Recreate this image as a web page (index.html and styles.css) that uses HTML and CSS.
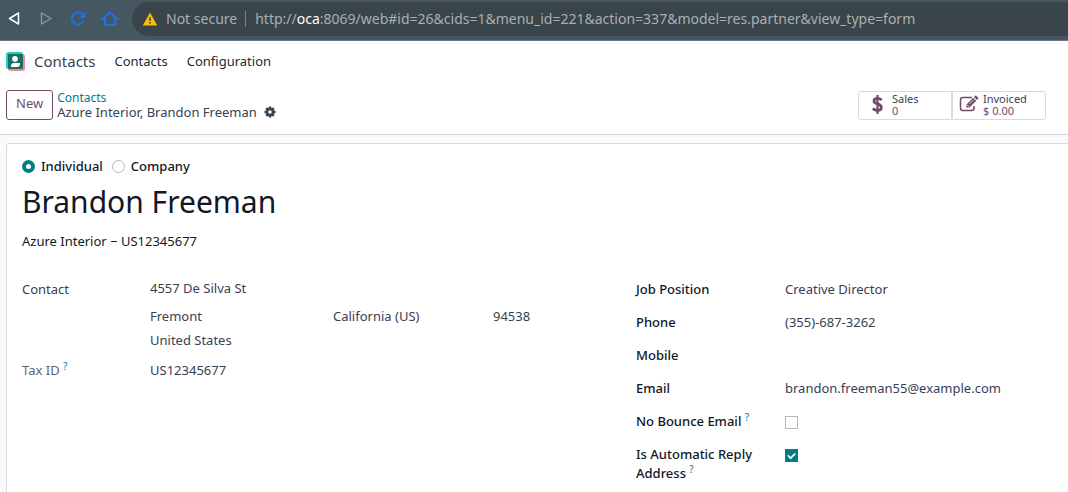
FILE: index.html
```html
<!DOCTYPE html>
<html lang="en">
<head>
<meta charset="utf-8">
<meta name="viewport" content="width=device-width, initial-scale=1">
<title>Brandon Freeman</title>
<link rel="stylesheet" href="styles.css">
</head>
<body>
<div class="browser-bar">
  <div class="browser-buttons">
    <button class="browser-button" aria-label="Back"><svg width="18" height="18" viewBox="0 0 18 18"><path d="M4.500 8.500L13.500 3V14Z" fill="none" stroke="#fff" stroke-width="1.500" stroke-linejoin="round"/></svg></button>
    <button class="browser-button" aria-label="Forward"><svg width="18" height="18" viewBox="0 0 18 18"><path d="M14 8.500L4.500 3V14Z" fill="none" stroke="#8f999e" stroke-width="1.300" stroke-linejoin="round"/></svg></button>
    <button class="browser-button" aria-label="Reload"><svg width="18" height="18" viewBox="0 0 18 18"><path d="M14 5A6.100 6.100 0 1 0 14.800 10.300" fill="none" stroke="#1a73e8" stroke-width="2"/><path d="M16 2V8H10Z" fill="#1a73e8"/></svg></button>
    <button class="browser-button" aria-label="Home"><svg width="18" height="18" viewBox="0 0 18 18"><path d="M2 9L9 2.200L16 9H14V15H4V9Z" fill="none" stroke="#1a73e8" stroke-width="1.900"/></svg></button>
  </div>
  <div class="address-bar">
    <svg class="warning" width="16" height="16" viewBox="0 0 16 16"><path d="M8 1.500L15.300 14.500H.7Z" fill="#fbbc04"/><path d="M7.200 6.200H8.800V9.800H7.200ZM7.200 11H8.800V12.600H7.200Z" fill="#39454b"/></svg>
    <span class="security">Not secure</span>
    <span class="url">http://<span class="host">oca</span>:8069/web#id=26&amp;cids=1&amp;menu_id=221&amp;action=337&amp;model=res.partner&amp;view_type=form</span>
  </div>
</div>

<header class="top">
  <nav class="navbar">
    <a class="brand" href="#">
      <svg width="20" height="20" viewBox="0 0 20 20"><rect x="2" y="2" width="17" height="17" rx="2.500" fill="#fc868b"/><rect x="0" y="0" width="17" height="17" rx="2.500" fill="#1ad3bb"/><rect x="2" y="2" width="15" height="15" rx="1" fill="#1a6f66"/><circle cx="9" cy="6.800" r="2.900" fill="#fff"/><path d="M5 15V14Q5 11 8 11H14V12Q14 15 11 15Z" fill="#fff"/></svg>
      <span>Contacts</span>
    </a>
    <a class="menu" href="#">Contacts</a>
    <a class="menu" href="#">Configuration</a>
  </nav>
  <div class="control-panel">
    <button class="new">New</button>
    <div class="breadcrumb">
      <a href="#">Contacts</a>
      <div class="current">
        <span>Azure Interior, Brandon Freeman</span>
        <button class="gear" aria-label="Actions"><svg width="12" height="12" viewBox="0 0 12 12"><path d="M6 .5V11.500M.5 6H11.500" stroke="#374151" stroke-width="2.600"/><path d="M2.200 2.200L9.800 9.800M9.800 2.200L2.200 9.800" stroke="#374151" stroke-width="2.400"/><circle cx="6" cy="6" r="3" fill="#fff" stroke="#374151" stroke-width="2.500"/></svg></button>
      </div>
    </div>
    <div class="stats">
      <button class="stat">
        <svg width="20" height="20" viewBox="0 0 20 20"><path d="M10.500 0V19" stroke="#714b67" stroke-width="2.200"/><path d="M14.700 5Q12.800 3.400 10.400 3.400Q7 3.400 7 5.900Q7 7.900 10.500 8.900Q14.300 10 14.300 12.500Q14.300 15.400 10.500 15.400Q7.700 15.400 5.900 13.500" fill="none" stroke="#714b67" stroke-width="2.800"/></svg>
        <span class="stat-text"><span>Sales</span><span class="stat-value">0</span></span>
      </button>
      <button class="stat">
        <svg width="20" height="20" viewBox="0 0 20 20"><path d="M13 2.500H4Q1.500 2.500 1.500 5V13Q1.500 15.500 4 15.500H12.500Q15 15.500 15 13V11" fill="none" stroke="#714b67" stroke-width="1.500"/><path d="M7.500 9.500L14.200 2.800L17.200 5.800L10.500 12.500H7.500ZM15 2L16.200 .8Q16.700 .3 17.200 .8L19.200 2.800Q19.700 3.300 19.200 3.800L18 5Z" fill="#714b67"/><path d="M8.300 10L10 11.700M10.500 8.800L14.500 4.800" stroke="#fff" stroke-width=".8"/></svg>
        <span class="stat-text"><span>Invoiced</span><span class="stat-value">$ 0.00</span></span>
      </button>
    </div>
  </div>
</header>

<main class="sheet">
  <div class="company-type">
    <label><input class="radio" type="radio" name="type" checked>Individual</label>
    <label><input class="radio" type="radio" name="type">Company</label>
  </div>
  <h1>Brandon Freeman</h1>
  <p class="subtitle">Azure Interior − US12345677</p>
  <div class="groups">
    <dl class="fields contact">
      <dt class="contact-label">Contact</dt>
      <dd class="address">
        <span class="street">4557 De Silva St</span>
        <span>Fremont</span><span>California (US)</span><span>94538</span>
        <span class="country">United States</span>
      </dd>
      <dt class="muted">Tax ID <sup>?</sup></dt>
      <dd>US12345677</dd>
    </dl>
    <dl class="fields details">
      <dt>Job Position</dt><dd>Creative Director</dd>
      <dt>Phone</dt><dd>(355)-687-3262</dd>
      <dt>Mobile</dt><dd></dd>
      <dt>Email</dt><dd>brandon.freeman55@example.com</dd>
      <dt><label for="no-bounce">No Bounce Email <sup>?</sup></label></dt><dd><input class="check" type="checkbox" id="no-bounce"></dd>
      <dt><label for="auto-reply">Is Automatic Reply Address <sup>?</sup></label></dt><dd><input class="check" type="checkbox" id="auto-reply" checked></dd>
    </dl>
  </div>
</main>
</body>
</html>
```
FILE: styles.css
```css
* { box-sizing: border-box; }

body {
  display: flex;
  flex-direction: column;
  min-height: 100vh;
  margin: 0;
  overflow: hidden;
  background: #f9fafb;
  color: #374151;
  font: 13px/19px "Noto Sans", sans-serif;
}

button {
  padding: 0;
  border: 0;
  background: none;
  color: inherit;
  font: inherit;
  cursor: pointer;
}

a { color: inherit; text-decoration: none; }
svg { display: block; flex: none; }

.browser-bar {
  display: flex;
  align-items: center;
  height: 41px;
  padding: 0 0 3px 5px;
  border-bottom: 1px solid #6b7a82;
  background: #455761;
}

.browser-buttons { display: flex; gap: 14px; width: 127px; }

.address-bar {
  display: flex;
  flex: 1;
  align-items: center;
  height: 34px;
  padding: 0 10px;
  border-radius: 17px 0 0 17px;
  background: #39454b;
  color: #a9afb2;
  font-size: 14px;
  white-space: nowrap;
}

.security {
  margin: 0 9px 0 8px;
  padding-right: 8px;
  border-right: 1px solid #7a8387;
  line-height: 16px;
}

.host { color: #fff; }

.top {
  border-bottom: 1px solid #d8dadd;
  background: #fff;
}

.navbar {
  display: flex;
  align-items: center;
  gap: 19px;
  height: 41px;
  padding: 0 6px;
  color: #1f2937;
}

.brand {
  display: flex;
  align-items: center;
  gap: 8px;
  color: #374151;
  font-size: 15px;
}

.control-panel {
  display: flex;
  align-items: center;
  height: 52px;
  padding: 0 22px 6px 6px;
}

.new {
  height: 30px;
  padding: 0 9px 3px;
  border: 1px solid #714b67;
  border-radius: 3px;
  color: #714b67;
}

.breadcrumb {
  flex: 1;
  margin-left: 4px;
  font-size: 12px;
  line-height: 14px;
}

.breadcrumb a { color: #017e84; }

.current {
  display: flex;
  align-items: center;
  gap: 7px;
  font-size: 13px;
}

.stats { display: flex; }

.stat {
  display: flex;
  align-items: center;
  gap: 4px;
  width: 94px;
  height: 29px;
  padding: 0 6px;
  border: 1px solid #d8dadd;
  font-size: 11px;
  line-height: 12px;
  text-align: left;
}

.stat:first-child { gap: 5px; padding-left: 8px; border-radius: 3px 0 0 3px; }
.stat:last-child { border-radius: 0 3px 3px 0; }
.stat-text { display: flex; flex-direction: column; }
.stat-value { color: #714b67; }

.sheet {
  flex: 1;
  margin: 8px 0 0 6px;
  padding: 13px 16px 0 15px;
  border: solid #d8dadd;
  border-width: 1px 0 0 1px;
  border-radius: 3px 0 0 0;
  background: #fff;
}

.company-type { display: flex; gap: 9px; }

.company-type label {
  display: flex;
  align-items: center;
  gap: 6px;
  color: #111827;
  font-weight: 500;
}

.radio, .check {
  width: 13px;
  height: 13px;
  margin: 0;
  border: 1px solid #b5b7ba;
  background: #fff;
  appearance: none;
}

.radio { border-radius: 50%; }
.radio:checked { border: 4px solid #017e84; }

.check {
  display: grid;
  place-items: center;
}

.check:checked { border-color: #017e84; background: #017e84; }

.check:checked::before {
  width: 7px;
  height: 4px;
  margin-bottom: 2px;
  border: solid #fff;
  border-width: 0 0 2px 2px;
  content: "";
  transform: rotate(-45deg) scale(0.8);
}

h1 {
  margin: 5px 0 0;
  color: #111827;
  font-size: 30px;
  font-weight: 400;
  line-height: 42px;
}

.subtitle { margin: 9px 0 0; color: #111827; }

.groups {
  display: grid;
  grid-template-columns: minmax(0, 1fr) 416px;
  margin-top: 28px;
}

.fields { display: grid; align-content: start; margin: 0; }
dd { margin: 0; }
.contact { grid-template-columns: 128px 1fr; row-gap: 11px; }
.contact-label { padding-top: 1px; }

.address {
  display: grid;
  grid-template-columns: 183px 160px 1fr;
  row-gap: 5px;
}

.street, .country { grid-column: 1 / -1; }
.street { margin-bottom: 4px; }
.muted { color: #5f6672; }

.details { grid-template-columns: 149px 1fr; row-gap: 13px; padding-top: 1px; }
.details dt { min-height: 20px; padding-right: 20px; color: #111827; font-weight: 500; }
.details .check { margin-top: 4px; }

sup {
  color: #0180a5;
  font-size: 10px;
  font-weight: 400;
  line-height: 0;
}
```
